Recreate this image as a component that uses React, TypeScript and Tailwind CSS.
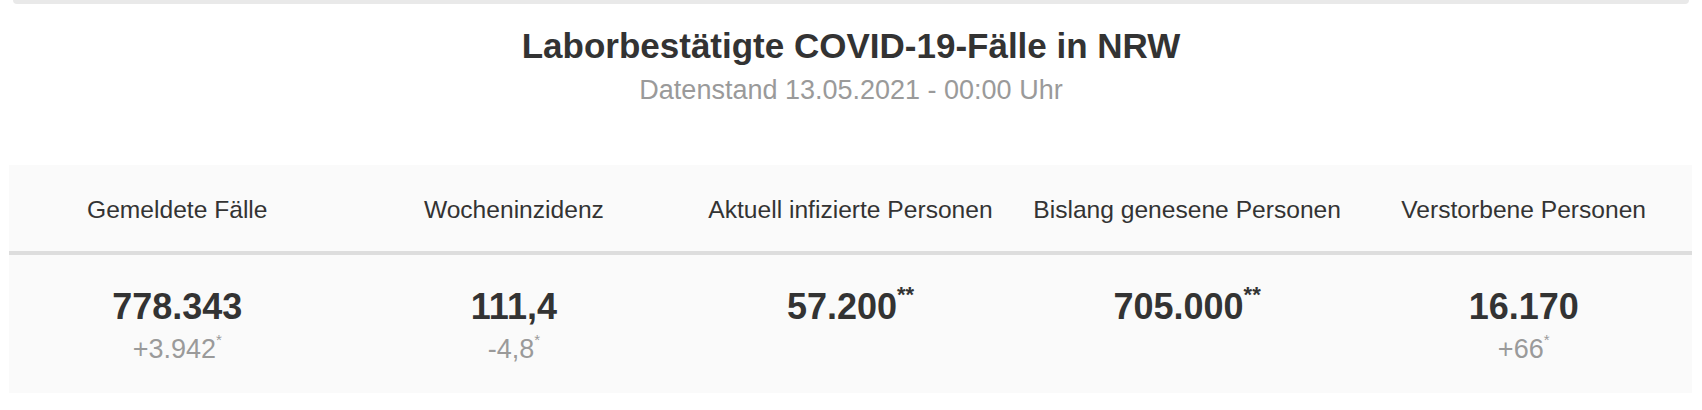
import React from "react";

type Stat = { label: string; value: string; valueMark?: string; delta?: string };

const stats: Stat[] = [
  { label: "Gemeldete Fälle", value: "778.343", delta: "+3.942" },
  { label: "Wocheninzidenz", value: "111,4", delta: "-4,8" },
  { label: "Aktuell infizierte Personen", value: "57.200", valueMark: "**" },
  { label: "Bislang genesene Personen", value: "705.000", valueMark: "**" },
  { label: "Verstorbene Personen", value: "16.170", delta: "+66" },
];

export default function App() {
  return (
    <div
      className="w-[1702px] h-[410px] bg-white flex flex-col text-[#333333]"
      style={{ fontFamily: '"Liberation Sans", Arial, Helvetica, sans-serif' }}
    >
      <div className="ml-[13px] mr-[13px] h-[4px] bg-[#e9e9e9] rounded-b-[5px]" />
      <h1 className="mt-[22px] text-center text-[35px] leading-[40px] font-bold text-[#333333]">
        Laborbestätigte COVID-19-Fälle in NRW
      </h1>
      <p className="mt-[8px] text-center text-[27px] leading-[32px] text-[#9a9a9a]">
        Datenstand 13.05.2021 - 00:00 Uhr
      </p>
      <div className="mt-[59px] ml-[9px] mr-[10px] bg-[#fafafa] flex flex-col">
        <div className="grid grid-cols-5 h-[86px] items-center pt-[3px]">
          {stats.map((s) => (
            <div key={s.label} className="text-center text-[24.6px] leading-[28px] text-[#333333]">
              {s.label}
            </div>
          ))}
        </div>
        <div className="h-[4px] bg-[#dddddd]" />
        <div className="grid grid-cols-5 h-[138px] pt-[32px]">
          {stats.map((s) => (
            <div key={s.label} className="flex flex-col items-center">
              <div className="text-[36px] leading-[40px] font-bold text-[#333333]">
                {s.value}
                {s.valueMark && (
                  <span className="relative -top-[3px] align-top text-[22px] leading-none font-bold">
                    {s.valueMark}
                  </span>
                )}
              </div>
              {s.delta && (
                <div className="mt-[7px] text-[27px] leading-[30px] text-[#9a9a9a]">
                  {s.delta}
                  <span className="relative -top-[2px] align-top text-[15px] leading-none">*</span>
                </div>
              )}
            </div>
          ))}
        </div>
      </div>
    </div>
  );
}
